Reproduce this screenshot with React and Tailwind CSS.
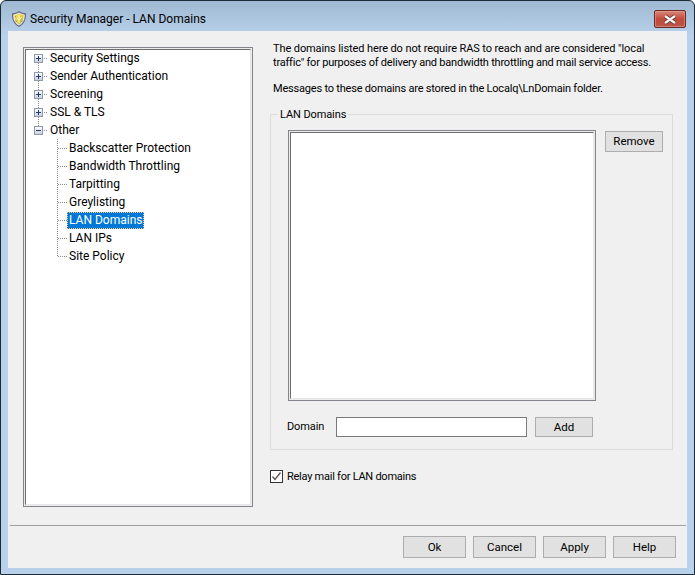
import React from "react";

const font = "font-['Roboto',sans-serif] text-[12px] leading-[15px] text-black";

const topItems = [
  { label: "Security Settings", last: false, open: false },
  { label: "Sender Authentication", last: false, open: false },
  { label: "Screening", last: false, open: false },
  { label: "SSL & TLS", last: false, open: false },
  { label: "Other", last: true, open: true },
];

const otherItems = ["Backscatter Protection", "Bandwidth Throttling", "Tarpitting", "Greylisting", "LAN Domains", "LAN IPs", "Site Policy"];

function ExpandBox({ open }) {
  return (
    <svg width="9" height="9" viewBox="0 0 9 9" shapeRendering="crispEdges" className="absolute left-0 top-[5px]">
      <defs>
        <linearGradient id="boxFill" x1="0" y1="0" x2="0" y2="1">
          <stop offset="0" stopColor="#ffffff" />
          <stop offset="1" stopColor="#c6cedb" />
        </linearGradient>
      </defs>
      <rect x="0.5" y="0.5" width="8" height="8" fill="url(#boxFill)" stroke="#8e9aab" />
      <rect x="2" y="4" width="5" height="1" fill="#1f3a6b" />
      {!open && <rect x="4" y="2" width="1" height="5" fill="#1f3a6b" />}
    </svg>
  );
}

function TopRow({ label, last, open, first }) {
  return (
    <div className="flex h-[18px] items-center">
      <div className="relative ml-[8px] h-[18px] w-[16px] shrink-0">
        <svg width="16" height="18" viewBox="0 0 16 18" shapeRendering="crispEdges" className="absolute left-0 top-0">
          <path d={`M4.5 ${first ? 14 : 0}V${last ? 5 : 18}`} stroke="#8a8a8a" strokeDasharray="1 1" fill="none" />
          <path d="M10 9.5H14" stroke="#8a8a8a" strokeDasharray="1 1" fill="none" />
        </svg>
        <ExpandBox open={open} />
      </div>
      <span className="whitespace-nowrap">{label}</span>
    </div>
  );
}

function ChildRow({ label, last, selected }) {
  return (
    <div className="flex h-[18px] items-center">
      <svg width="16" height="18" viewBox="0 0 16 18" shapeRendering="crispEdges" className="ml-[27px] shrink-0">
        <path d={`M4.5 0V${last ? 10 : 18}`} stroke="#8a8a8a" strokeDasharray="1 1" fill="none" />
        <path d="M5 9.5H14" stroke="#8a8a8a" strokeDasharray="1 1" fill="none" />
      </svg>
      {selected ? (
        <span className="-ml-[2px] flex h-[17px] items-center whitespace-nowrap border border-dotted border-[#f5c77a] bg-[#0078d7] px-px text-white">{label}</span>
      ) : (
        <span className="whitespace-nowrap">{label}</span>
      )}
    </div>
  );
}

function Button({ children, className }) {
  return (
    <button className={`flex items-center justify-center border border-[#adadad] bg-[#e1e1e1] text-[11.5px] text-black ${className}`}>
      {children}
    </button>
  );
}

// outer grey line, light line, then the dark top/left inner edge
function Sunken({ className, children }) {
  return (
    <div className={`border border-[#84848c] ${className}`}>
      <div className="h-full w-full border border-[#ececec]">
        <div className="h-full w-full border border-b-[#e6e6e6] border-l-[#6d6d6d] border-r-[#e6e6e6] border-t-[#6d6d6d] bg-white">{children}</div>
      </div>
    </div>
  );
}

function Shield() {
  return (
    <svg width="16" height="18" viewBox="0 0 16 18" className="shrink-0">
      <defs>
        <linearGradient id="shieldFill" x1="0" y1="0" x2="1" y2="1">
          <stop offset="0" stopColor="#f6e85a" />
          <stop offset="0.55" stopColor="#e4c92c" />
          <stop offset="1" stopColor="#a8a04a" />
        </linearGradient>
      </defs>
      <path d="M8 1 C10 2.6 12.4 3.2 15 3.2 C15.4 9 13.4 14 8 17 C2.6 14 .6 9 1 3.2 C3.6 3.2 6 2.6 8 1Z" fill="#6a6a84" />
      <path d="M8 2.6 C10 3.8 12 4.3 13.8 4.4 C14 9 12.4 13.2 8 15.6 C3.6 13.2 2 9 2.2 4.4 C4 4.3 6 3.8 8 2.6Z" fill="#e8e6d8" />
      <path d="M8 3.8 C9.4 4.7 10.8 5.1 12.4 5.2 C12.5 9 11.2 12.2 8 14.4 C4.8 12.2 3.5 9 3.6 5.2 C5.2 5.1 6.6 4.7 8 3.8Z" fill="url(#shieldFill)" />
      <path d="M8 5V13M5.4 7.2L8 10.2L10.6 7.2" stroke="#fffbe0" strokeWidth="1" fill="none" />
      <path d="M4.6 10.5l1 1.6M11.4 10.5l-1 1.6" stroke="#7aa83a" strokeWidth="1" fill="none" />
      <path d="M4.4 6.4l.6 1" stroke="#c0504a" strokeWidth="1" fill="none" />
    </svg>
  );
}

export default function App() {
  return (
    <div className={`h-[575px] w-[695px] overflow-hidden bg-white ${font}`}>
      <div className="flex h-full w-full flex-col rounded-t-[6px] border border-[#1c2a33] bg-gradient-to-b from-[#9fb9d3] from-0% via-[#b9d1ea] via-[6%] to-[#b9d1ea] px-[7px] pb-[6px]">
        {/* title bar */}
        <div className="flex h-[30px] shrink-0 items-center">
          <div className="flex translate-y-[3px] items-center gap-[3px] pl-[3px]">
            <Shield />
            <span>Security Manager - LAN Domains</span>
          </div>
          <button className="ml-auto mr-px flex h-[18px] w-[32px] translate-y-[3px] items-center justify-center rounded-[2px] border border-[#6b2a22] bg-gradient-to-b from-[#d9877b] via-[#c2493a] to-[#b8584a] shadow-[inset_0_0_0_1px_#e8a89c80]">
            <svg width="16" height="11" viewBox="0 0 16 11">
              <path d="M3 2L13 9M13 2L3 9" stroke="#4a2a28" strokeWidth="3.6" />
              <path d="M3 2L13 9M13 2L3 9" stroke="#f4f4f4" strokeWidth="2.4" />
            </svg>
          </button>
        </div>

        {/* client area */}
        <div className="flex min-h-0 flex-1 flex-col bg-[#f0f0f0]">
          <div className="flex h-[494px] shrink-0 pl-[15px] pt-[16px]">
            <Sunken className="h-[460px] w-[230px] shrink-0">
              <div className="-mt-px">
                {topItems.map((item, i) => (
                  <TopRow key={item.label} {...item} first={i === 0} />
                ))}
                {otherItems.map((label, i) => (
                  <ChildRow key={label} label={label} last={i === otherItems.length - 1} selected={label === "LAN Domains"} />
                ))}
              </div>
            </Sunken>

            <div className="ml-[17px] flex w-[403px] flex-col text-[11px] tracking-[-0.1px]">
              <div className="-mt-[5px] pl-[3px]">
                <p className="whitespace-nowrap leading-[14px]">The domains listed here do not require RAS to reach and are considered "local</p>
                <p className="whitespace-nowrap tracking-[-0.21px] leading-[14px]">traffic" for purposes of delivery and bandwidth throttling and mail service access.</p>
                <p className="mt-[12px] whitespace-nowrap tracking-[-0.2px] leading-[14px]">Messages to these domains are stored in the Localq\LnDomain folder.</p>
              </div>

              <div className="relative mt-[18px] h-[336px] border border-[#dcdcdc] pl-[17px] pt-[15px]">
                <span className="absolute left-[7px] top-[-8px] bg-[#f0f0f0] px-[2px]">LAN Domains</span>
                <div className="flex items-start">
                  <Sunken className="h-[271px] w-[308px] shrink-0" />
                  <Button className="ml-[9px] mt-px h-[21px] w-[58px] tracking-normal">Remove</Button>
                </div>
                <div className="-ml-px mt-[16px] flex items-center">
                  <span className="w-[49px] shrink-0 -translate-y-px">Domain</span>
                  <div className="h-[20px] w-[191px] shrink-0 border border-[#7a7a7a] bg-white" />
                  <Button className="ml-[8px] h-[20px] w-[58px] tracking-normal">Add</Button>
                </div>
              </div>

              <div className="mt-[19px] flex items-center gap-[4px]">
                <div className="flex h-[13px] w-[13px] shrink-0 items-center justify-center border border-[#333333] bg-white">
                  <svg width="11" height="11" viewBox="0 0 11 11">
                    <path d="M1.5 5.5L4 8.5L9.5 1.5" stroke="#555555" strokeWidth="1.3" fill="none" />
                  </svg>
                </div>
                <span className="tracking-[-0.25px]">Relay mail for LAN domains</span>
              </div>
            </div>
          </div>

          <div className="ml-[2px] mr-px h-px shrink-0 bg-[#a0a0a0]" />

          <div className="flex justify-end gap-[7px] pr-[11px] pt-[10px]">
            <Button className="h-[22px] w-[63px]">Ok</Button>
            <Button className="h-[22px] w-[63px]">Cancel</Button>
            <Button className="h-[22px] w-[63px]">Apply</Button>
            <Button className="h-[22px] w-[63px]">Help</Button>
          </div>
        </div>
      </div>
    </div>
  );
}
